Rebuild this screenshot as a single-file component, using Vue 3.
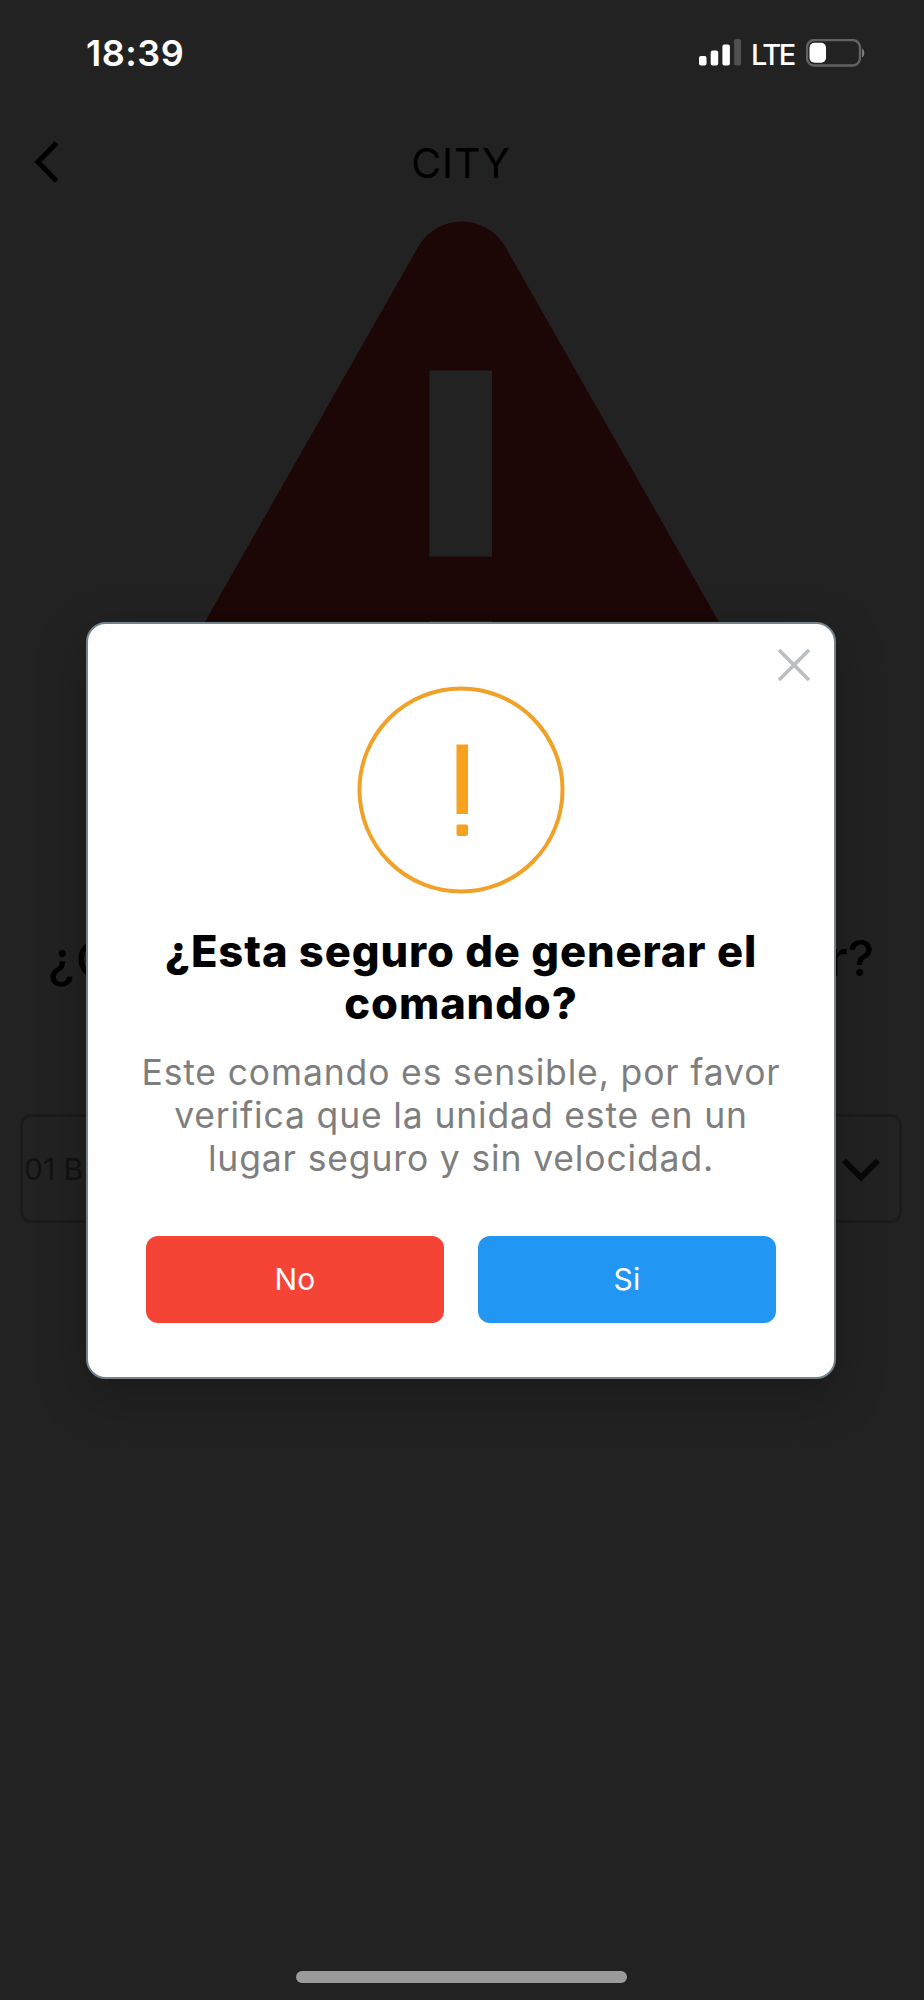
<script setup>
const titleLines = ['¿Esta seguro de generar el', 'comando?']
const bodyLines = [
  'Este comando es sensible, por favor',
  'verifica que la unidad este en un',
  'lugar seguro y sin velocidad.',
]
</script>

<template>
  <div class="screen">
    <div class="status">
      <span class="time">18:39</span>
      <div class="indicators">
        <svg class="signal" width="43" height="28" viewBox="0 0 43 28">
          <rect x="0" y="17" width="7.5" height="9.5" rx="2" fill="#fff" />
          <rect x="11.7" y="11.5" width="7.5" height="15" rx="2" fill="#fff" />
          <rect x="23.4" y="5.5" width="7.5" height="21" rx="2" fill="#fff" />
          <rect x="35.1" y="0" width="7" height="26.5" rx="2" fill="#505050" />
        </svg>
        <span class="lte">LTE</span>
        <svg class="battery" width="60" height="28" viewBox="0 0 60 28">
          <rect x="1" y="1" width="53" height="25.5" rx="7.5" fill="none" stroke="#626262" stroke-width="2.4" />
          <rect x="3.5" y="3.7" width="16.5" height="20" rx="5" fill="#fff" />
          <path d="M56 9.5c3 1 3 8 0 9z" fill="#7b7b7b" />
        </svg>
      </div>
    </div>

    <header class="nav">
      <svg class="back" width="30" height="48" viewBox="0 0 30 48">
        <path d="M25.5 5 7 24 25.5 43" fill="none" stroke="#000" stroke-width="5" />
      </svg>
      <h1>CITY</h1>
    </header>

    <svg class="warning" width="640" height="480" viewBox="0 0 640 480">
      <path
        fill="#1c0606"
        fill-rule="evenodd"
        d="M278 24.5C298 -7.5 344 -7.5 363.5 24.5L623 480H19zM288.5 149.5V335.5H351V149.5zM288.5 400V460H351V400z"
      />
    </svg>

    <div class="question"><span class="start">¿C</span><span class="end">r?</span></div>

    <div class="select">
      <span>01 B</span>
      <svg width="46" height="32" viewBox="0 0 46 32">
        <path d="M6 7.5 23 24.5 40 7.5" fill="none" stroke="#080808" stroke-width="6" />
      </svg>
    </div>

    <div class="home"></div>

    <section class="dialog">
      <svg class="close" width="36" height="36" viewBox="0 0 36 36">
        <path d="M3 3 33 33M33 3 3 33" stroke="#b9bec3" stroke-width="3.6" />
      </svg>
      <svg class="alert" width="208" height="208" viewBox="0 0 208 208">
        <circle cx="104" cy="104" r="101.5" fill="none" stroke="#f2a128" stroke-width="4" />
        <rect x="99.5" y="58.5" width="11.5" height="69.5" fill="#f7a21f" />
        <rect x="99.5" y="138.5" width="11.5" height="11.5" rx="2" fill="#f7a21f" />
      </svg>
      <h2><span v-for="line in titleLines" :key="line">{{ line }}</span></h2>
      <p><span v-for="line in bodyLines" :key="line">{{ line }}</span></p>
      <div class="actions">
        <button class="no">No</button>
        <button class="yes">Si</button>
      </div>
    </section>
  </div>
</template>

<style>
body { margin: 0; background: #222; }
</style>

<style scoped>
.screen {
  position: relative;
  box-sizing: border-box;
  width: 924px;
  height: 2000px;
  overflow: hidden;
  display: flex;
  flex-direction: column;
  background: #222;
  font-family: Inter, "Liberation Sans", sans-serif;
}
.status {
  display: flex;
  justify-content: space-between;
  align-items: flex-start;
  height: 67px;
  padding: 39px 58px 0 86px;
  box-sizing: border-box;
  color: #fff;
}
.time { font-size: 36px; line-height: 28px; font-weight: 600; letter-spacing: 0.5px; }
.indicators { display: flex; gap: 10px; }
.lte { width: 44px; margin-left: -1px; margin-right: 1px; font-size: 29px; line-height: 31px; font-weight: 500; letter-spacing: -2.4px; }
.nav {
  height: 84px;
  margin-top: 53px;
  display: flex;
  align-items: center;
  justify-content: center;
  position: relative;
}
.back { position: absolute; left: 31px; top: 18px; }
h1 { margin: 1px 2px 0 0; font-size: 41px; line-height: 48px; font-weight: 400; letter-spacing: 0.8px; color: #000; }
.warning { display: block; margin: 17px 0 0 141px; }
.question {
  display: flex;
  justify-content: space-between;
  margin-top: 227px;
  padding: 0 50px 0 48px;
  font-size: 50px;
  line-height: 60px;
  font-weight: 500;
  color: #000;
}
.start { padding-top: 1px; height: 59px; letter-spacing: 1.5px; }
.select {
  box-sizing: border-box;
  width: 882px;
  height: 109px;
  margin: 126px 0 0 20px;
  padding: 0 15px 0 1px;
  border: 3px solid #1b1b1b;
  border-radius: 11px;
  display: flex;
  align-items: center;
  justify-content: space-between;
  color: #121212;
  font-size: 30px;
}
.home { width: 331px; height: 12px; border-radius: 6px; background: #9a9a9a; margin: auto 0 17.5px 296px; }
.dialog {
  position: absolute;
  left: 86px;
  top: 622px;
  width: 750px;
  height: 757px;
  box-sizing: border-box;
  border: 2px solid #74838b;
  border-radius: 20px;
  background: #fff;
  box-shadow: 0 16px 50px rgba(0, 0, 0, 0.25);
  display: flex;
  flex-direction: column;
  align-items: center;
}
.close { position: absolute; left: 688px; top: 23px; }
.alert { margin-top: 62px; flex: none; }
h2 { margin: 32px 0 0; font-size: 43.5px; line-height: 51.5px; font-weight: 800; letter-spacing: 0.9px; color: #000; text-align: center; }
h2 span, p span { display: block; white-space: nowrap; }
p { margin: 22px 0 0; font-size: 35.5px; line-height: 43px; letter-spacing: 0.85px; color: #7e7e7e; text-align: center; }
.actions { display: flex; gap: 34px; margin-top: 56px; }
button {
  width: 298px;
  height: 87px;
  padding: 0;
  border: 0;
  border-radius: 12px;
  font: 400 30px/87px Inter, "Liberation Sans", sans-serif;
  letter-spacing: 0.3px;
  color: #fff;
}
.no { background: #f54336; }
.yes { background: #2196f3; }
</style>
